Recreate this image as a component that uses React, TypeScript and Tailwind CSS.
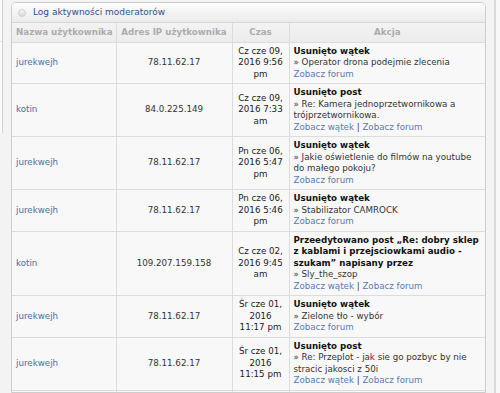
import React from 'react';

type Row = {
  user: string;
  ip: string;
  time: string[];
  title: string;
  detail?: string;
  thread?: boolean;
};

const rows: Row[] = [
  { user: 'jurekwejh', ip: '78.11.62.17', time: ['Cz cze 09,', '2016 9:56', 'pm'], title: 'Usunięto wątek', detail: 'Operator drona podejmie zlecenia' },
  { user: 'kotin', ip: '84.0.225.149', time: ['Cz cze 09,', '2016 7:33', 'am'], title: 'Usunięto post', detail: 'Re: Kamera jednoprzetwornikowa a trójprzetwornikowa.', thread: true },
  { user: 'jurekwejh', ip: '78.11.62.17', time: ['Pn cze 06,', '2016 5:47', 'pm'], title: 'Usunięto wątek', detail: 'Jakie oświetlenie do filmów na youtube do małego pokoju?' },
  { user: 'jurekwejh', ip: '78.11.62.17', time: ['Pn cze 06,', '2016 5:46', 'pm'], title: 'Usunięto wątek', detail: 'Stabilizator CAMROCK' },
  { user: 'kotin', ip: '109.207.159.158', time: ['Cz cze 02,', '2016 9:45', 'am'], title: 'Przeedytowano post „Re: dobry sklep z kablami i przejsciowkami audio - szukam” napisany przez', detail: 'Sly_the_szop', thread: true },
  { user: 'jurekwejh', ip: '78.11.62.17', time: ['Śr cze 01,', '2016', '11:17 pm'], title: 'Usunięto wątek', detail: 'Zielone tło - wybór' },
  { user: 'jurekwejh', ip: '78.11.62.17', time: ['Śr cze 01,', '2016', '11:15 pm'], title: 'Usunięto post', detail: 'Re: Przeplot - jak sie go pozbyc by nie stracic jakosci z 50i', thread: true },
  { user: 'kotin', ip: '84.0.225.149', time: ['Śr cze 01,', '2016 8:02', 'pm'], title: 'Usunięto post', detail: 'Re: Test', thread: true },
];

const App: React.FC = () => {
  return (
    <div
      className="flex w-[500px] h-[393px] overflow-hidden bg-[#f3f3f3] text-[8.7px] leading-[11.5px] text-[#222]"
      style={{ fontFamily: '"DejaVu Sans", Verdana, sans-serif' }}
    >
      {/* sidebar edge */}
      <div className="w-[11px] shrink-0">
        <div className="w-[3px] h-[133px] bg-[#fbfbfb] border-r border-[#cfcfcf] flex flex-col">
          <div className="h-[42px] border-b border-[#dedede]"></div>
        </div>
      </div>

      {/* panel */}
      <div className="w-[475px] shrink-0 mt-[2px] border border-[#cdcdcd] rounded-t-[5px] bg-[#f8f8f8] overflow-hidden">
        <div className="h-[20px] flex items-center gap-[7px] pl-[6px] bg-gradient-to-b from-[#fdfdfd] to-[#ebebeb] border-b border-[#d6d6d6]">
          <span className="w-[8px] h-[8px] rounded-full border border-[#d0d0d0] bg-gradient-to-b from-[#f4f4f4] to-[#dadada]"></span>
          <span className="text-[9px] text-[#2f5283]">Log aktywności moderatorów</span>
        </div>
        <table className="w-full table-fixed border-collapse">
          <colgroup>
            <col className="w-[104px]" />
            <col className="w-[116px]" />
            <col className="w-[57px]" />
            <col />
          </colgroup>
          <thead>
            <tr className="h-[19px] bg-gradient-to-b from-[#f3f3f3] to-[#ececec] text-[#acacac] font-bold">
              <th className="border-r border-b border-[#dcdcdc] text-left pl-[4px] font-bold">Nazwa użytkownika</th>
              <th className="border-r border-b border-[#dcdcdc] text-center font-bold">Adres IP użytkownika</th>
              <th className="border-r border-b border-[#dcdcdc] text-center font-bold">Czas</th>
              <th className="border-b border-[#dcdcdc] text-center font-bold">Akcja</th>
            </tr>
          </thead>
          <tbody>
            {rows.map((r, i) => (
              <tr key={i}>
                <td className="border-r border-b border-[#dcdcdc] pl-[4px] py-[3px] align-middle text-[#4b6da3]">{r.user}</td>
                <td className="border-r border-b border-[#dcdcdc] py-[3px] text-center align-middle text-[#333]">{r.ip}</td>
                <td className="border-r border-b border-[#dcdcdc] py-[3px] text-center align-middle">
                  {r.time.map((t, j) => (
                    <div key={j}>{t}</div>
                  ))}
                </td>
                <td className="border-b border-[#dcdcdc] pl-[4px] pr-[6px] py-[3px] align-middle">
                  <div className="font-bold text-[#111]">{r.title}</div>
                  {r.detail && <div className="text-[#333]">» {r.detail}</div>}
                  <div className="text-[#5a7bab]">
                    {r.thread && (
                      <>
                        <span>Zobacz wątek</span>
                        <span className="text-[#333]"> | </span>
                      </>
                    )}
                    <span>Zobacz forum</span>
                  </div>
                </td>
              </tr>
            ))}
          </tbody>
        </table>
      </div>

      {/* right edge */}
      <div className="flex-1 flex">
        <div className="w-[8px] bg-[#f4f4f4]"></div>
        <div className="w-[2px] bg-[#dadada]"></div>
        <div className="flex-1 bg-[#f8f8f8]"></div>
      </div>
    </div>
  );
};

export default App;
